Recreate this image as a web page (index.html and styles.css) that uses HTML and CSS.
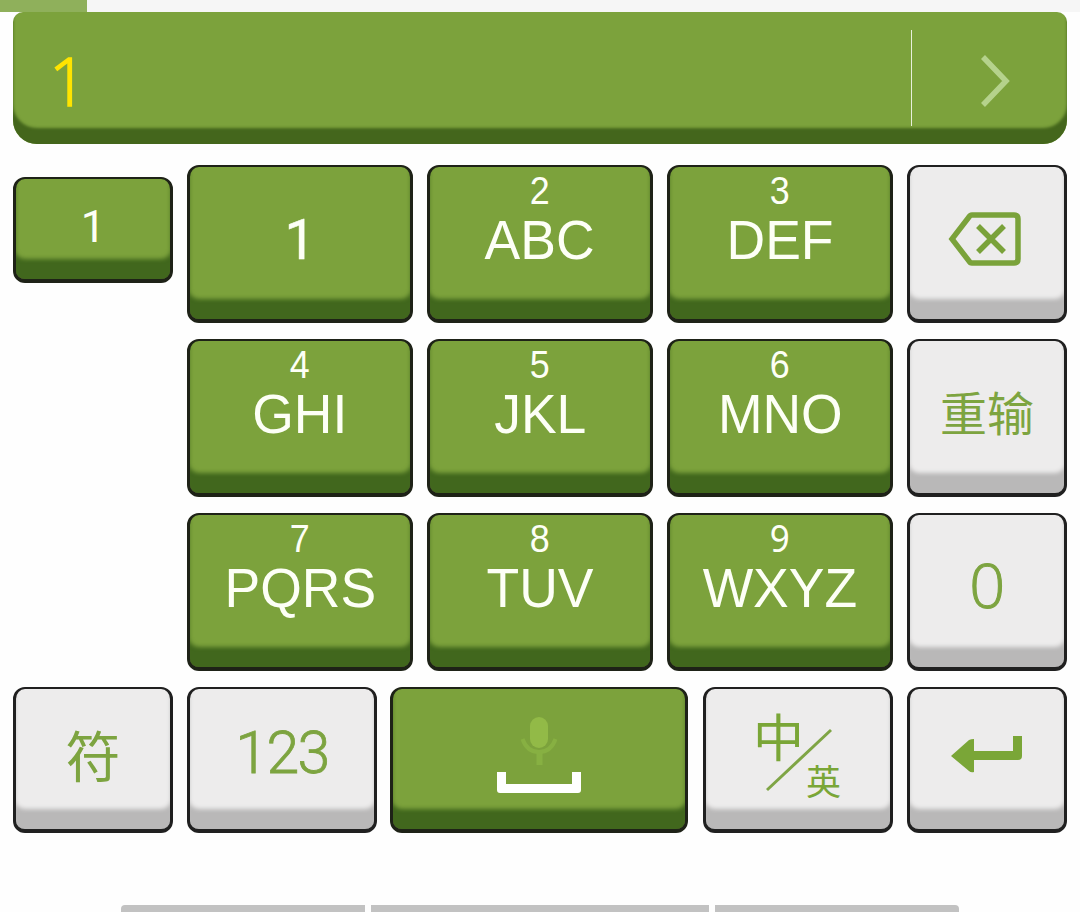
FILE: index.html
```html
<!DOCTYPE html>
<html lang="zh-CN">
<head>
    <meta charset="UTF-8">
    <meta name="viewport" content="width=device-width, initial-scale=1.0">
    <title>Keyboard</title>
    <link rel="stylesheet" href="styles.css">
</head>
<body>
    <div class="top-strip"><div class="top-progress"></div></div>

    <div class="keyboard">
        <div class="candidates">
            <span class="candidate">1</span>
            <div class="more">
                <svg width="34" height="54" viewBox="0 0 34 54">
                    <path d="M5 3 L28 27 L5 51" fill="none" stroke="#b5d28c" stroke-width="5.500"/>
                </svg>
            </div>
        </div>

        <div class="grid">
            <div class="key side">1</div>
            <div class="key one">1</div>
            <div class="key"><span class="num">2</span><span class="abc">ABC</span></div>
            <div class="key"><span class="num">3</span><span class="abc">DEF</span></div>
            <div class="key light">
                <svg class="backspace" width="74" height="56" viewBox="0 0 74 56">
                    <path d="M24 4 H66 Q70 4 70 8 V48 Q70 52 66 52 H24 Q22 52 21 50 L4 28 L21 6 Q22 4 24 4 Z" fill="none" stroke="#7aa23a" stroke-width="5.500"/>
                    <path d="M30 15 L56 41 M56 15 L30 41" stroke="#7aa23a" stroke-width="5.500"/>
                </svg>
            </div>

            <div class="key col2"><span class="num">4</span><span class="abc">GHI</span></div>
            <div class="key"><span class="num">5</span><span class="abc">JKL</span></div>
            <div class="key"><span class="num">6</span><span class="abc">MNO</span></div>
            <div class="key light retype">重输</div>

            <div class="key col2"><span class="num">7</span><span class="abc">PQRS</span></div>
            <div class="key"><span class="num">8</span><span class="abc">TUV</span></div>
            <div class="key"><span class="num nine">9</span><span class="abc">WXYZ</span></div>
            <div class="key light zero"><span>0</span></div>
        </div>

        <div class="bottom-row">
            <div class="key light symbols">符</div>
            <div class="key light wide digits">123</div>
            <div class="key space">
                <svg width="84" height="80" viewBox="0 0 84 80">
                    <g stroke="#87b042" fill="none">
                        <path d="M25.500 26 Q30 39 42 39 Q54 39 58.500 26" stroke-width="4"/>
                        <path d="M42.500 39 V52" stroke-width="6"/>
                    </g>
                    <rect x="33" y="4" width="18" height="31" rx="9" fill="#92ba47"/>
                    <path d="M0 59 H9 V71 H75 V59 H84 V77 Q84 80 81 80 H3 Q0 80 0 77 Z" fill="#fff"/>
                </svg>
            </div>
            <div class="key light wide">
                <svg class="lang" width="100" height="112" viewBox="0 0 100 112">
                    <text x="5" y="56" font-size="51">中</text>
                    <path d="M19 89 L83 29" stroke="#7fa545" stroke-width="3"/>
                    <text x="58" y="94" font-size="35">英</text>
                </svg>
            </div>
            <div class="key light">
                <svg class="enter" width="72" height="38" viewBox="0 0 72 38">
                    <path d="M0 20 L18 4 Q20 3 23 3 V15 H62 V0 H71 V20 Q71 24 67 24 H23 V36 Q20 37 18 35 Z" fill="#7aa637"/>
                </svg>
            </div>
        </div>
    </div>

    <div class="handles"><i></i><i></i><i></i></div>
</body>
</html>
```
FILE: styles.css
```css
body {
    margin: 0;
    height: 912px;
    display: flex;
    flex-direction: column;
    background: #fefefe;
    font-family: "Liberation Sans", Arial, "Noto Sans CJK SC", sans-serif;
    overflow: hidden;
}

.top-strip {
    height: 12px;
    background: #f6f6f6;
}

.top-progress {
    width: 87px;
    height: 12px;
    background: #8fb05b;
}

.keyboard {
    padding: 0 13px;
}

/* candidate bar */
.candidates {
    height: 132px;
    box-sizing: border-box;
    padding-bottom: 18px;
    display: flex;
    justify-content: space-between;
    align-items: flex-end;
    border-radius: 10px 10px 24px 24px;
    background: #7ca23c;
    box-shadow: inset 0 -16px 3px #44661c;
}

.candidate {
    margin-left: 36px;
    line-height: 92px;
    font-family: "Open Sans", sans-serif;
    font-size: 67px;
    font-weight: 300;
    color: #ffe400;
    -webkit-text-stroke: 1.5px #ffe400;
}

.more {
    width: 156px;
    height: 96px;
    box-sizing: border-box;
    border-left: 1px solid #e9f0dc;
    padding: 5px 0 0 66px;
    display: flex;
    align-items: center;
}

/* keys */
.grid {
    margin-top: 21px;
    display: grid;
    grid-template-columns: 160px 226px 226px 226px 160px;
    grid-auto-rows: 158px;
    gap: 16px 14px;
}

.col2 {
    grid-column: 2;
}

.key {
    box-sizing: border-box;
    display: flex;
    flex-direction: column;
    align-items: center;
    border: solid #1e2217;
    border-width: 2px 3px 4px;
    border-radius: 12px;
    background: #7ca23c;
    box-shadow: inset 0 -21px 4px -1px #41671d;
    color: #fdfff6;
}

.light {
    justify-content: center;
    padding-bottom: 12px;
    border-color: #202020;
    background: #edecec;
    box-shadow: inset 0 -21px 4px -1px #b9b8b8;
    color: #7da440;
}

.num {
    font-size: 39px;
    line-height: 46px;
    padding-top: 1px;
    margin-bottom: -1px;
    transform: scaleX(0.92);
}

.nine {
    font-family: "Noto Sans", sans-serif;
    font-size: 38px;
    line-height: 43px;
    margin-bottom: 2px;
}

.abc {
    font-size: 56px;
    line-height: 54px;
    transform: scaleX(0.955);
}

.side {
    height: 106px;
    margin-top: 12px;
    font: 400 44px/97px Roboto, sans-serif;
}

.one {
    font: 400 55px/147px Roboto, sans-serif;
    -webkit-text-stroke: 0.5px #fdfff6;
}

.retype {
    font: 400 47px/60px "Noto Sans CJK SC", sans-serif;
}

.zero {
    font: 300 60px/60px "Open Sans", sans-serif;
    -webkit-text-stroke: 1px #7da440;
}

.zero span {
    transform: scaleX(1.05);
}

.symbols {
    font: 400 55px/60px "Noto Sans CJK SC", sans-serif;
}

.digits {
    font: 300 59px/60px Roboto, sans-serif;
    letter-spacing: -1.5px;
    -webkit-text-stroke: 0.8px #7da440;
}

.backspace {
    margin: 4px 5px 0 0;
}

.enter {
    margin-top: 4px;
}

.bottom-row {
    margin-top: 16px;
    display: flex;
    gap: 14px;
}

.bottom-row .key {
    width: 160px;
    height: 146px;
}

.bottom-row .wide {
    width: 190px;
}

.bottom-row .space {
    width: 298px;
    margin: 0 1px 0 -1px;
    padding-top: 24px;
}

.lang {
    margin-top: 8px;
    font-family: "Noto Sans CJK SC", sans-serif;
    fill: #7aa637;
    overflow: visible;
}

/* navigation handles */
.handles {
    margin: auto 121px 0;
    height: 7px;
    display: flex;
    gap: 6px;
    border-radius: 4px 4px 0 0;
    overflow: hidden;
}

.handles i {
    width: 244px;
    background: #c2c2c2;
}

.handles i:nth-child(2) {
    width: 338px;
}
```
